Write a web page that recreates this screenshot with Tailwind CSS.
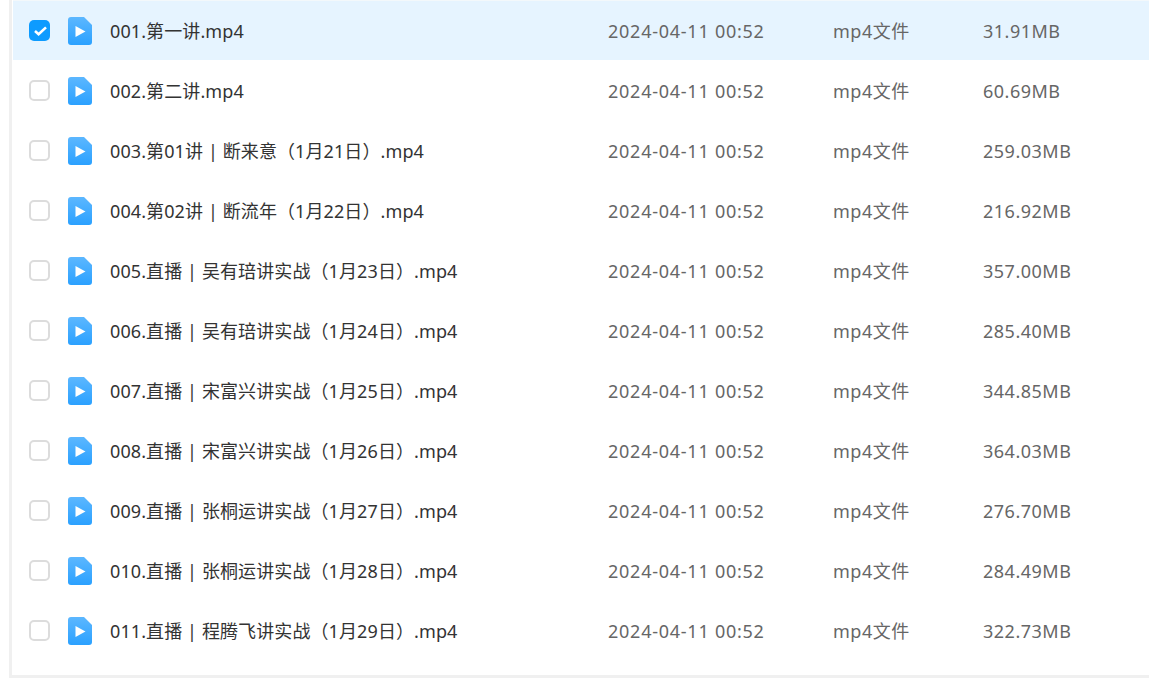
<!DOCTYPE html>
<html lang="en">
<head>
    <meta charset="UTF-8">
    <title>文件列表</title>
    <script src="https://cdn.jsdelivr.net/npm/@tailwindcss/browser@4"></script>
</head>
<body class="bg-white h-[678px] overflow-hidden font-['Noto_Sans','Noto_Sans_CJK_SC',sans-serif] text-[18px] text-[#666]">
    <svg class="block" width="0" height="0">
        <defs>
            <linearGradient id="fileBlue" x1="0" y1="0" x2="0" y2="1">
                <stop offset="0" stop-color="#5cb7ff"/>
                <stop offset="1" stop-color="#2ba1ff"/>
            </linearGradient>
            <symbol id="fileVideo" viewBox="0 0 24 28">
                <path d="M3 0h13l8 8v17a3 3 0 0 1-3 3H3a3 3 0 0 1-3-3V3a3 3 0 0 1 3-3z" fill="url(#fileBlue)"/>
                <path d="M7.5 9l10 5.5-10 5.5z" fill="#fff"/>
            </symbol>
        </defs>
    </svg>
    <div class="ml-[9px] h-[678px] border-l-[3px] border-b-[3px] border-[#f0f0f0] pl-px overflow-hidden">
        <!-- selected row -->
        <div class="flex items-center h-[60px] bg-[#e6f4ff] shadow-[inset_0_1px_0_#f3f8fb]">
            <div class="w-[55px] pl-[16px] shrink-0 pt-px">
                <div class="w-[21px] h-[21px] rounded-[5px] bg-[#0d9bff] flex items-center justify-center">
                    <svg width="15" height="15" viewBox="0 0 15 15" fill="none"><path d="M3 8l3.6 3.2L14 4.4" stroke="#fff" stroke-width="2.6"/></svg>
                </div>
            </div>
            <svg class="shrink-0 mt-px" width="24" height="28"><use href="#fileVideo"/></svg>
            <div class="w-[516px] pl-[18px] shrink-0 pt-[2px] text-[#333] tracking-[0.1px]">001.第一讲.mp4</div>
            <div class="w-[225px] shrink-0 pt-[2px] tracking-[0.75px]">2024-04-11 00:52</div>
            <div class="w-[150px] shrink-0 pt-[2px] tracking-[0.5px]">mp4文件</div>
            <div class="pt-[2px] tracking-[0.5px]">31.91MB</div>
        </div>
        <div class="flex items-center h-[60px]">
            <div class="w-[55px] pl-[16px] shrink-0 pt-px"><div class="w-[21px] h-[21px] rounded-[5px] border-2 border-[#dcdcdc] bg-white"></div></div>
            <svg class="shrink-0 mt-px" width="24" height="28"><use href="#fileVideo"/></svg>
            <div class="w-[516px] pl-[18px] shrink-0 pt-[2px] text-[#333] tracking-[0.1px]">002.第二讲.mp4</div>
            <div class="w-[225px] shrink-0 pt-[2px] tracking-[0.75px]">2024-04-11 00:52</div>
            <div class="w-[150px] shrink-0 pt-[2px] tracking-[0.5px]">mp4文件</div>
            <div class="pt-[2px] tracking-[0.5px]">60.69MB</div>
        </div>
        <div class="flex items-center h-[60px]">
            <div class="w-[55px] pl-[16px] shrink-0 pt-px"><div class="w-[21px] h-[21px] rounded-[5px] border-2 border-[#dcdcdc] bg-white"></div></div>
            <svg class="shrink-0 mt-px" width="24" height="28"><use href="#fileVideo"/></svg>
            <div class="w-[516px] pl-[18px] shrink-0 pt-[2px] text-[#333] tracking-[0.1px]">003.第01讲 | 断来意（1月21日）.mp4</div>
            <div class="w-[225px] shrink-0 pt-[2px] tracking-[0.75px]">2024-04-11 00:52</div>
            <div class="w-[150px] shrink-0 pt-[2px] tracking-[0.5px]">mp4文件</div>
            <div class="pt-[2px] tracking-[0.5px]">259.03MB</div>
        </div>
        <div class="flex items-center h-[60px]">
            <div class="w-[55px] pl-[16px] shrink-0 pt-px"><div class="w-[21px] h-[21px] rounded-[5px] border-2 border-[#dcdcdc] bg-white"></div></div>
            <svg class="shrink-0 mt-px" width="24" height="28"><use href="#fileVideo"/></svg>
            <div class="w-[516px] pl-[18px] shrink-0 pt-[2px] text-[#333] tracking-[0.1px]">004.第02讲 | 断流年（1月22日）.mp4</div>
            <div class="w-[225px] shrink-0 pt-[2px] tracking-[0.75px]">2024-04-11 00:52</div>
            <div class="w-[150px] shrink-0 pt-[2px] tracking-[0.5px]">mp4文件</div>
            <div class="pt-[2px] tracking-[0.5px]">216.92MB</div>
        </div>
        <div class="flex items-center h-[60px]">
            <div class="w-[55px] pl-[16px] shrink-0 pt-px"><div class="w-[21px] h-[21px] rounded-[5px] border-2 border-[#dcdcdc] bg-white"></div></div>
            <svg class="shrink-0 mt-px" width="24" height="28"><use href="#fileVideo"/></svg>
            <div class="w-[516px] pl-[18px] shrink-0 pt-[2px] text-[#333] tracking-[0.1px]">005.直播 | 吴有琣讲实战（1月23日）.mp4</div>
            <div class="w-[225px] shrink-0 pt-[2px] tracking-[0.75px]">2024-04-11 00:52</div>
            <div class="w-[150px] shrink-0 pt-[2px] tracking-[0.5px]">mp4文件</div>
            <div class="pt-[2px] tracking-[0.5px]">357.00MB</div>
        </div>
        <div class="flex items-center h-[60px]">
            <div class="w-[55px] pl-[16px] shrink-0 pt-px"><div class="w-[21px] h-[21px] rounded-[5px] border-2 border-[#dcdcdc] bg-white"></div></div>
            <svg class="shrink-0 mt-px" width="24" height="28"><use href="#fileVideo"/></svg>
            <div class="w-[516px] pl-[18px] shrink-0 pt-[2px] text-[#333] tracking-[0.1px]">006.直播 | 吴有琣讲实战（1月24日）.mp4</div>
            <div class="w-[225px] shrink-0 pt-[2px] tracking-[0.75px]">2024-04-11 00:52</div>
            <div class="w-[150px] shrink-0 pt-[2px] tracking-[0.5px]">mp4文件</div>
            <div class="pt-[2px] tracking-[0.5px]">285.40MB</div>
        </div>
        <div class="flex items-center h-[60px]">
            <div class="w-[55px] pl-[16px] shrink-0 pt-px"><div class="w-[21px] h-[21px] rounded-[5px] border-2 border-[#dcdcdc] bg-white"></div></div>
            <svg class="shrink-0 mt-px" width="24" height="28"><use href="#fileVideo"/></svg>
            <div class="w-[516px] pl-[18px] shrink-0 pt-[2px] text-[#333] tracking-[0.1px]">007.直播 | 宋富兴讲实战（1月25日）.mp4</div>
            <div class="w-[225px] shrink-0 pt-[2px] tracking-[0.75px]">2024-04-11 00:52</div>
            <div class="w-[150px] shrink-0 pt-[2px] tracking-[0.5px]">mp4文件</div>
            <div class="pt-[2px] tracking-[0.5px]">344.85MB</div>
        </div>
        <div class="flex items-center h-[60px]">
            <div class="w-[55px] pl-[16px] shrink-0 pt-px"><div class="w-[21px] h-[21px] rounded-[5px] border-2 border-[#dcdcdc] bg-white"></div></div>
            <svg class="shrink-0 mt-px" width="24" height="28"><use href="#fileVideo"/></svg>
            <div class="w-[516px] pl-[18px] shrink-0 pt-[2px] text-[#333] tracking-[0.1px]">008.直播 | 宋富兴讲实战（1月26日）.mp4</div>
            <div class="w-[225px] shrink-0 pt-[2px] tracking-[0.75px]">2024-04-11 00:52</div>
            <div class="w-[150px] shrink-0 pt-[2px] tracking-[0.5px]">mp4文件</div>
            <div class="pt-[2px] tracking-[0.5px]">364.03MB</div>
        </div>
        <div class="flex items-center h-[60px]">
            <div class="w-[55px] pl-[16px] shrink-0 pt-px"><div class="w-[21px] h-[21px] rounded-[5px] border-2 border-[#dcdcdc] bg-white"></div></div>
            <svg class="shrink-0 mt-px" width="24" height="28"><use href="#fileVideo"/></svg>
            <div class="w-[516px] pl-[18px] shrink-0 pt-[2px] text-[#333] tracking-[0.1px]">009.直播 | 张桐运讲实战（1月27日）.mp4</div>
            <div class="w-[225px] shrink-0 pt-[2px] tracking-[0.75px]">2024-04-11 00:52</div>
            <div class="w-[150px] shrink-0 pt-[2px] tracking-[0.5px]">mp4文件</div>
            <div class="pt-[2px] tracking-[0.5px]">276.70MB</div>
        </div>
        <div class="flex items-center h-[60px]">
            <div class="w-[55px] pl-[16px] shrink-0 pt-px"><div class="w-[21px] h-[21px] rounded-[5px] border-2 border-[#dcdcdc] bg-white"></div></div>
            <svg class="shrink-0 mt-px" width="24" height="28"><use href="#fileVideo"/></svg>
            <div class="w-[516px] pl-[18px] shrink-0 pt-[2px] text-[#333] tracking-[0.1px]">010.直播 | 张桐运讲实战（1月28日）.mp4</div>
            <div class="w-[225px] shrink-0 pt-[2px] tracking-[0.75px]">2024-04-11 00:52</div>
            <div class="w-[150px] shrink-0 pt-[2px] tracking-[0.5px]">mp4文件</div>
            <div class="pt-[2px] tracking-[0.5px]">284.49MB</div>
        </div>
        <div class="flex items-center h-[60px]">
            <div class="w-[55px] pl-[16px] shrink-0 pt-px"><div class="w-[21px] h-[21px] rounded-[5px] border-2 border-[#dcdcdc] bg-white"></div></div>
            <svg class="shrink-0 mt-px" width="24" height="28"><use href="#fileVideo"/></svg>
            <div class="w-[516px] pl-[18px] shrink-0 pt-[2px] text-[#333] tracking-[0.1px]">011.直播 | 程腾飞讲实战（1月29日）.mp4</div>
            <div class="w-[225px] shrink-0 pt-[2px] tracking-[0.75px]">2024-04-11 00:52</div>
            <div class="w-[150px] shrink-0 pt-[2px] tracking-[0.5px]">mp4文件</div>
            <div class="pt-[2px] tracking-[0.5px]">322.73MB</div>
        </div>
    </div>
</body>
</html>
